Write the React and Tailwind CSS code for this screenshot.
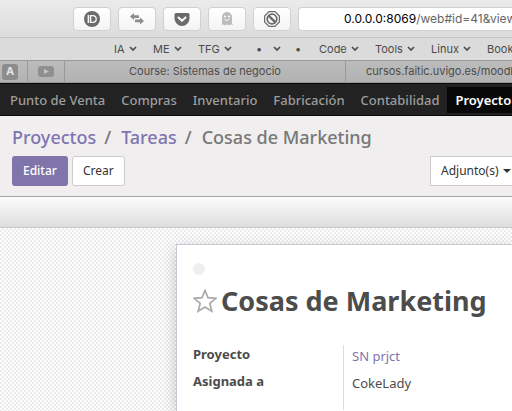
import React from "react";

const icons = {
  password: (
    <svg viewBox="0 0 16 16" className="size-4">
      <circle cx="8" cy="8" r="8" fill="#6b6b6b" />
      <path d="M3.600 4h1.600v8H3.600z" fill="#fafafa" />
      <path d="M6.600 4.600h2.200a3.400 3.400 0 0 1 0 6.800H6.600z" fill="none" stroke="#fafafa" strokeWidth="1.300" />
    </svg>
  ),
  arrows: (
    <svg viewBox="0 0 16 16" className="size-4" fill="#8d8d8d">
      <path d="M1 5.500L5 2v2.200h5v2.800H5V9z" />
      <path d="M15 10l-4 3.500v-2.200H6V8.500h5V6.500z" />
    </svg>
  ),
  pocket: (
    <svg viewBox="0 0 16 16" className="size-4">
      <path d="M2 2h12a1.500 1.500 0 0 1 1.500 1.500V7.500a7.500 7.500 0 0 1-15 0V3.500A1.500 1.500 0 0 1 2 2z" fill="#6b6b6b" />
      <path d="M4.500 6.500L8 9.800l3.500-3.300" fill="none" stroke="#fafafa" strokeWidth="2" strokeLinecap="round" strokeLinejoin="round" />
    </svg>
  ),
  ghost: (
    <svg viewBox="0 0 16 16" className="size-4">
      <path d="M3 14V6a5 5 0 0 1 10 0V12l1 2-2.400-.6L10 14.500l-2-1.200-2 1.200-1.600-1.100L2 14z" fill="#bcbcbc" />
      <circle cx="6" cy="5.500" r="1.100" fill="#f8f8f8" />
      <circle cx="10" cy="5.500" r="1.100" fill="#f8f8f8" />
      <path d="M5.500 8.300q2.500 2.600 5 0" fill="none" stroke="#f8f8f8" />
    </svg>
  ),
  block: (
    <svg viewBox="0 0 16 16" className="size-4" fill="none" stroke="#6b6b6b">
      <path d="M5 .6h6L15.400 5v6L11 15.400H5L.6 11V5z" strokeWidth="1.200" />
      <circle cx="8" cy="8" r="4.800" strokeWidth="1.800" />
      <path d="M4.600 4.600l6.800 6.800" strokeWidth="2.400" />
    </svg>
  ),
};

const extensions = [
  ["Password manager", icons.password],
  ["Switch", icons.arrows],
  ["Pocket", icons.pocket],
  ["Ghostery", icons.ghost],
  ["Block content", icons.block],
];

const apps = ["Punto de Venta", "Compras", "Inventario", "Fabricación", "Contabilidad", "Proyecto"];

function Chevron() {
  return (
    <svg viewBox="0 0 8 6" className="h-[6px] w-2 shrink-0" fill="none" stroke="#505050" strokeWidth="1.700">
      <path d="M1 1l3 3 3-3" />
    </svg>
  );
}

function Bookmark({ label, menu = true, className = "" }) {
  return (
    <button className={`flex shrink-0 items-center gap-1 ${className}`}>
      {label}
      {menu && <Chevron />}
    </button>
  );
}

function Browser() {
  return (
    <header className="font-[Inter,Roboto,sans-serif] text-[11px] text-[#4b4b4b]">
      <div className="flex h-[38px] items-center gap-[7px] border-b border-[#c6c6c6] bg-linear-to-b from-[#ebebeb] to-[#dcdcdc] pl-[73px]">
        {extensions.map(([name, icon]) => (
          <button
            key={name}
            aria-label={name}
            className="flex h-6 w-[38px] shrink-0 items-center justify-center rounded border border-[#d0d0d0] bg-linear-to-b from-white to-[#f4f4f4]"
          >
            {icon}
          </button>
        ))}
        <button
          aria-label="Address"
          className="flex h-6 min-w-0 flex-1 items-center overflow-hidden rounded-l border border-r-0 border-[#d0d0d0] bg-white pl-[45px] text-xs whitespace-nowrap text-[#666]"
        >
          <span className="text-black">0.0.0.0:8069</span>/web#id=41&amp;view_type=form
        </button>
      </div>
      <nav className="flex h-[22px] items-center overflow-hidden bg-[#dbdbdb] pl-[114px] whitespace-nowrap">
        <Bookmark label="IA" className="w-[39px]" />
        <Bookmark label="ME" className="w-[45px]" />
        <Bookmark label="TFG" className="w-[58px]" />
        <Bookmark label="•" menu={false} className="w-[17px]" />
        <Bookmark label="" className="w-[22px]" />
        <Bookmark label="•" menu={false} className="w-6" />
        <Bookmark label="Code" className="w-14" />
        <Bookmark label="Tools" className="w-14" />
        <Bookmark label="Linux" className="w-14" />
        <Bookmark label="Books" />
      </nav>
      <div className="flex h-[23px] overflow-hidden border-y border-[#999] bg-linear-to-b from-[#bcbcbc] to-[#b2b2b2] whitespace-nowrap">
        <button aria-label="Pinned tab A" className="flex w-7 shrink-0 items-center border-r border-[#999] pl-[2px]">
          <span className="flex size-4 items-center justify-center rounded-[3px] bg-[#8c8c8c] font-bold text-[#e4e4e4]">A</span>
        </button>
        <button aria-label="Pinned video tab" className="flex w-[37px] shrink-0 items-center justify-center border-r border-[#999]">
          <svg viewBox="0 0 16 11" className="h-[11px] w-4">
            <rect width="16" height="11" rx="3" fill="#8f8f8f" />
            <path d="M6 3l5 2.500L6 8z" fill="#c4c4c4" />
          </svg>
        </button>
        <button className="w-[281px] shrink-0 border-r border-[#999]">Course: Sistemas de negocio</button>
        <button className="shrink-0 pl-5">cursos.faitic.uvigo.es/moodle</button>
      </div>
    </header>
  );
}

export default function App() {
  return (
    <div className="flex min-h-screen flex-col overflow-hidden bg-white font-['Noto_Sans','Open_Sans',sans-serif] text-[13px] text-[#4c4c4c]">
      <Browser />
      <nav className="flex h-[33px] items-center overflow-hidden border-y border-[#080808] bg-[#222] pl-[2px] whitespace-nowrap text-[#9d9d9d]">
        {apps.map((app) => (
          <a
            key={app}
            href="#app"
            className={`shrink-0 px-2 leading-[26px] ${app === "Proyecto" ? "bg-[#080808] font-semibold text-white" : "font-medium"}`}
          >
            {app}
          </a>
        ))}
      </nav>
      <div className="border-b border-[#a8a8a8] bg-[#f0eeee] px-3 pt-2 pb-[10px]">
        <ol className="flex h-8 items-start text-lg leading-[27px] font-medium whitespace-nowrap text-[#777]">
          <li><a href="#proyectos" className="text-[#7f75b0]">Proyectos</a></li>
          <li className="px-2">/</li>
          <li className="pl-[2px]"><a href="#tareas" className="text-[#7f75b0]">Tareas</a></li>
          <li className="px-2">/</li>
          <li className="pl-[2px]">Cosas de Marketing</li>
        </ol>
        <div className="flex gap-1 text-xs">
          <button className="h-[30px] rounded-[3px] bg-[#7f75ab] px-[11px] font-medium text-white">Editar</button>
          <button className="h-[30px] rounded-[3px] border border-[#ccc] bg-white px-[10px] text-[#333]">Crear</button>
          <button className="-mr-3 ml-auto flex h-[30px] w-[82px] items-center gap-1 border border-r-0 border-[#ccc] bg-white pl-[10px] text-[#333]">
            Adjunto(s)
            <svg viewBox="0 0 8 4" className="h-1 w-2" fill="#333"><path d="M0 0h8L4 4z" /></svg>
          </button>
        </div>
      </div>
      <div className="h-[31px] shrink-0 border-b border-[#cacaca] bg-linear-to-b from-[#fcfcfc] to-[#dedede]" />
      <main className="flex flex-1 flex-col bg-white bg-[repeating-conic-gradient(#ececec_0%_25%,#ffffff_0%_50%)] bg-size-[4px_4px] pt-4 pl-[176px]">
        <section className="flex-1 border-t border-l border-[#c8c8d3] bg-white pt-[18px] pl-4 shadow-[0_5px_15px_rgba(0,0,0,0.2)]">
          <div className="size-3 rounded-full bg-[#f0eeee]" />
          <div className="mt-[6px] flex h-10 items-center gap-1">
            <button aria-label="Favorito">
              <svg viewBox="0 0 24 24" className="size-6" fill="none" stroke="#aaa" strokeWidth="1.700">
                <path d="M12 1.500l3 7.200 8 .6-6.200 5 2 7.900L12 18l-6.800 4.200 2-7.900L1 9.300l8-.6z" />
              </svg>
            </button>
            <h1 className="text-[27px] font-bold whitespace-nowrap">Cosas de Marketing</h1>
          </div>
          <dl className="mt-6 grid grid-cols-[150px_1fr] leading-[22px]">
            <dt className="leading-[18px] font-bold">Proyecto</dt>
            <dd className="border-l border-[#ddd] pb-[5px] pl-2"><a href="#project" className="text-[#7f75b0]">SN prjct</a></dd>
            <dt className="leading-[18px] font-bold">Asignada a</dt>
            <dd className="border-l border-[#ddd] pb-4 pl-2">CokeLady</dd>
          </dl>
        </section>
      </main>
    </div>
  );
}
